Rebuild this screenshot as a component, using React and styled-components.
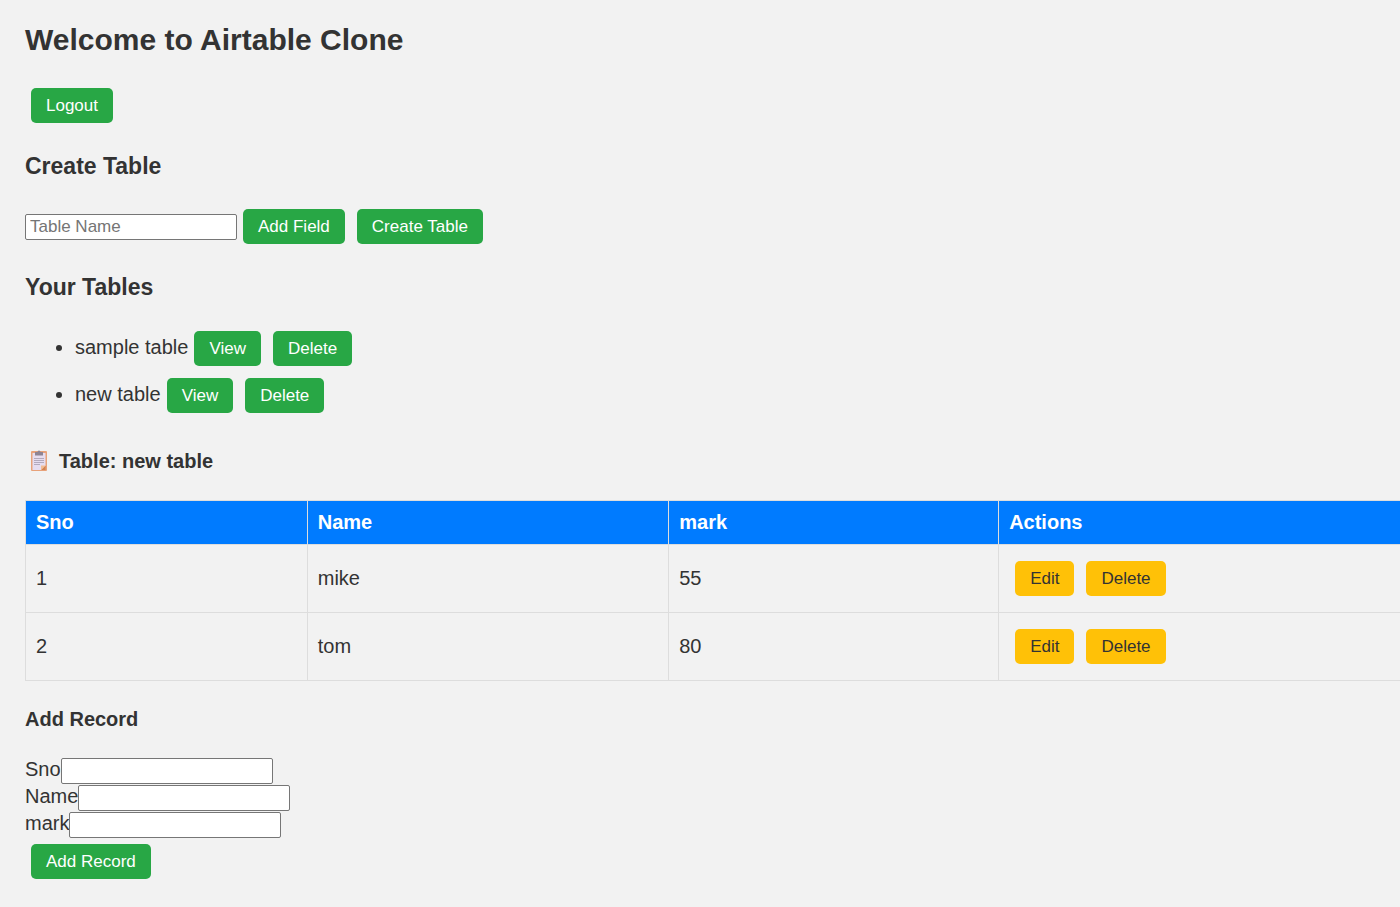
import React from "react";
import styled, { createGlobalStyle } from "styled-components";

const GlobalStyle = createGlobalStyle`
  *, *::before, *::after { box-sizing: border-box; }
  html { background: #f2f2f2; }
  body {
    margin: 0;
    color: #333;
    background: #f2f2f2;
    font: 20px/23px Arial, "Liberation Sans", sans-serif;
  }
`;

const Page = styled.main`
  padding: 22px 0 22px 25px;
`;

const Title = styled.h1`
  margin: 0 0 24px;
  font-size: 30px;
  line-height: 36px;
`;

const SectionTitle = styled.h2`
  margin: 24px 0;
  font-size: 23px;
  line-height: 26px;
`;

const SubTitle = styled.h3`
  display: flex;
  align-items: center;
  gap: 6px;
  margin: ${(p) => p.$top || 26}px 0 27px;
  font-size: 20px;
  line-height: 24px;
`;

const Toolbar = styled.div`
  display: flex;
  align-items: baseline;
`;

const Button = styled.button`
  height: 35px;
  margin: 6px;
  padding: 0 15px;
  border: 0;
  border-radius: 5px;
  background: ${(p) => (p.$tone === "warning" ? "#ffc107" : "#28a745")};
  color: ${(p) => (p.$tone === "warning" ? "#333" : "#fff")};
  font: 17px/19px Arial, "Liberation Sans", sans-serif;
  cursor: pointer;
`;

const TextInput = styled.input`
  width: 212px;
  height: 26px;
  padding: 1px 4px;
  border: 1px solid #767676;
  border-radius: 2px;
  background: #fff;
  color: #333;
  font: 17px/19px Arial, "Liberation Sans", sans-serif;
  &::placeholder { color: #757575; }
`;

const TableList = styled.ul`
  margin: 0;
  padding: 1px 0 0 50px;
`;

const TableItem = styled.li``;

const ClipboardIcon = styled.svg`
  width: 28px;
  height: 22px;
`;

const DataTable = styled.table`
  width: 100%;
  border-collapse: collapse;
  table-layout: fixed;
`;

const Column = styled.col`
  width: ${(p) => p.$width};
`;

const HeadCell = styled.th`
  padding: 10px;
  border: 1px solid #ddd;
  background: #007bff;
  color: #fff;
  text-align: left;
  &:last-child { border-right: 0; }
`;

const Cell = styled.td`
  padding: 10px;
  border: 1px solid #ddd;
  &:last-child { border-right: 0; }
`;

const RecordForm = styled.form`
  margin: 0;
`;

const RecordFields = styled.div`
  display: grid;
  gap: 1px;
`;

const RecordField = styled.div`
  display: flex;
  align-items: baseline;
`;

const columns = ["Sno", "Name", "mark"];
const widths = ["20.5%", "26.3%", "24%", "auto"];
const records = [
  ["1", "mike", "55"],
  ["2", "tom", "80"],
];

function Clipboard() {
  return (
    <ClipboardIcon viewBox="0 0 28 22" aria-hidden="true">
      <rect x="6" y="1" width="16" height="20" rx="1" fill="#e8a27a" />
      <path d="M7.500 3h13v12.500l-4.500 4.500H7.500z" fill="#e6ddf0" />
      <path d="M20.500 15.500v4.500H16z" fill="#d18352" />
      <path d="M16 15.500h4.500L16 20z" fill="#f3bd94" />
      <path d="M10 2h2.500a1.500 1.500 0 0 1 3 0H18v3.500h-8z" fill="#8d8494" />
      <path d="M9 8.500h10M9 10.500h10M9 12.500h10M9 14.500h6" stroke="#b3aabd" />
    </ClipboardIcon>
  );
}

export default function App() {
  return (
    <>
      <GlobalStyle />
      <Page>
        <Title>Welcome to Airtable Clone</Title>
        <Toolbar>
          <Button type="button">Logout</Button>
        </Toolbar>

        <SectionTitle>Create Table</SectionTitle>
        <Toolbar>
          <TextInput type="text" placeholder="Table Name" aria-label="Table Name" />
          <Button type="button">Add Field</Button>
          <Button type="button">Create Table</Button>
        </Toolbar>

        <SectionTitle>Your Tables</SectionTitle>
        <TableList>
          {["sample table", "new table"].map((name) => (
            <TableItem key={name}>
              {name}
              <Button type="button">View</Button>
              <Button type="button">Delete</Button>
            </TableItem>
          ))}
        </TableList>

        <SubTitle $top={30}>
          <Clipboard />
          Table: new table
        </SubTitle>
        <DataTable>
          <colgroup>
            {widths.map((w) => (
              <Column key={w} $width={w} />
            ))}
          </colgroup>
          <thead>
            <tr>
              {[...columns, "Actions"].map((c) => (
                <HeadCell key={c} scope="col">{c}</HeadCell>
              ))}
            </tr>
          </thead>
          <tbody>
            {records.map((record) => (
              <tr key={record[0]}>
                {record.map((value, i) => (
                  <Cell key={columns[i]}>{value}</Cell>
                ))}
                <Cell>
                  <Button type="button" $tone="warning">Edit</Button>
                  <Button type="button" $tone="warning">Delete</Button>
                </Cell>
              </tr>
            ))}
          </tbody>
        </DataTable>

        <SubTitle>Add Record</SubTitle>
        <RecordForm onSubmit={(e) => e.preventDefault()}>
          <RecordFields>
            {columns.map((c) => (
              <RecordField key={c}>
                <label htmlFor={`record-${c}`}>{c}</label>
                <TextInput id={`record-${c}`} type="text" />
              </RecordField>
            ))}
          </RecordFields>
          <Toolbar>
            <Button type="submit">Add Record</Button>
          </Toolbar>
        </RecordForm>
      </Page>
    </>
  );
}
